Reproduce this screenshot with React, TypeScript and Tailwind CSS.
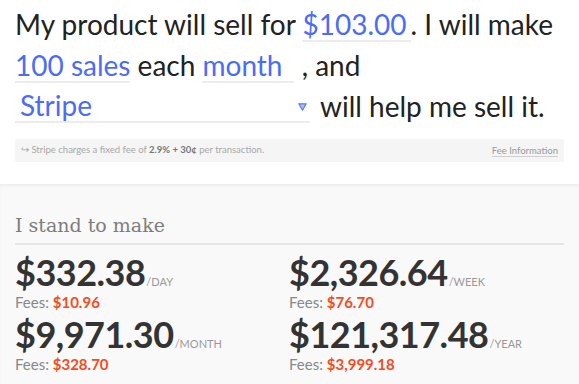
const rows = [
  { amount: "$332.38", unit: "/day", fees: "$10.96" },
  { amount: "$2,326.64", unit: "/week", fees: "$76.70" },
  { amount: "$9,971.30", unit: "/month", fees: "$328.70" },
  { amount: "$121,317.48", unit: "/year", fees: "$3,999.18" },
];

function Field({ children, className = "" }: { children: React.ReactNode; className?: string }) {
  return (
    <span className={`inline-block border-b-2 border-[#ececec] leading-[31px] text-[#4a6cf6] ${className}`}>
      {children}
    </span>
  );
}

export default function App() {
  return (
    <div className="h-[384px] w-[579px] overflow-hidden bg-white font-['Lato',sans-serif]">
      <div className="px-[15px] pt-[4px]">
        <div className="text-[28px] leading-[41px] text-[#222]">
          <p>
            My product will sell for <Field className="pr-[4px]">$103.00</Field>. I will make
          </p>
          <p>
            <Field>100 sales</Field> each <Field className="w-[92px]">month</Field> , and
          </p>
          <p className="flex items-center">
            <span className="flex h-[33px] w-[295px] items-center justify-between border-b-2 border-[#ececec] pl-[5px] pr-[3px] text-[#4a6cf6]">
              <span>Stripe</span>
              <svg width="9" height="8" viewBox="0 0 9 8" className="mt-[2px]">
                <polygon points="0.8,0.8 8.2,0.8 4.5,7.2" fill="#aebcf8" stroke="#5b78f0" strokeWidth="1.2" strokeLinejoin="round" />
              </svg>
            </span>
            <span className="ml-[10px]">will help me sell it.</span>
          </p>
        </div>

        <div className="mt-[12px] flex h-[23px] items-center justify-between rounded-[2px] bg-[#f5f5f5] pl-[6px] pr-[6px] text-[9.5px] text-[#a8a8a8]">
          <span>
            ↪ Stripe charges a fixed fee of <b className="font-bold text-[#777]">2.9% + 30¢</b> per transaction.
          </span>
          <span className="border-b border-[#cfcfcf] leading-[11px] text-[#999]">Fee Information</span>
        </div>
      </div>

      <div className="mt-[22px] h-[220px] bg-[#f9f9f9] px-[15px] pt-[28px] shadow-[inset_0_3px_4px_-2px_rgba(0,0,0,0.08)]">
        <h2 className="border-b-2 border-[#e6e6e6] pb-[5px] font-['DejaVu_Serif',serif] text-[19px] leading-[26px] text-[#7d7d7d]">
          I stand to make
        </h2>
        <div className="mt-[10px] grid w-[548px] grid-cols-2 gap-y-[6px]">
          {rows.map((r) => (
            <div key={r.amount} className="flex flex-col">
              <div className="flex h-[34px] items-baseline text-[#333]">
                <span className="text-[36px] font-bold leading-[34px] tracking-[-0.5px]">{r.amount}</span>
                <span className="ml-[1px] text-[11px] uppercase leading-[12px] text-[#999]">{r.unit}</span>
              </div>
              <div className="mt-[4px] text-[15px] leading-[18px] text-[#888]">
                Fees: <span className="font-bold text-[#f74a1e]">{r.fees}</span>
              </div>
            </div>
          ))}
        </div>
      </div>
    </div>
  );
}
